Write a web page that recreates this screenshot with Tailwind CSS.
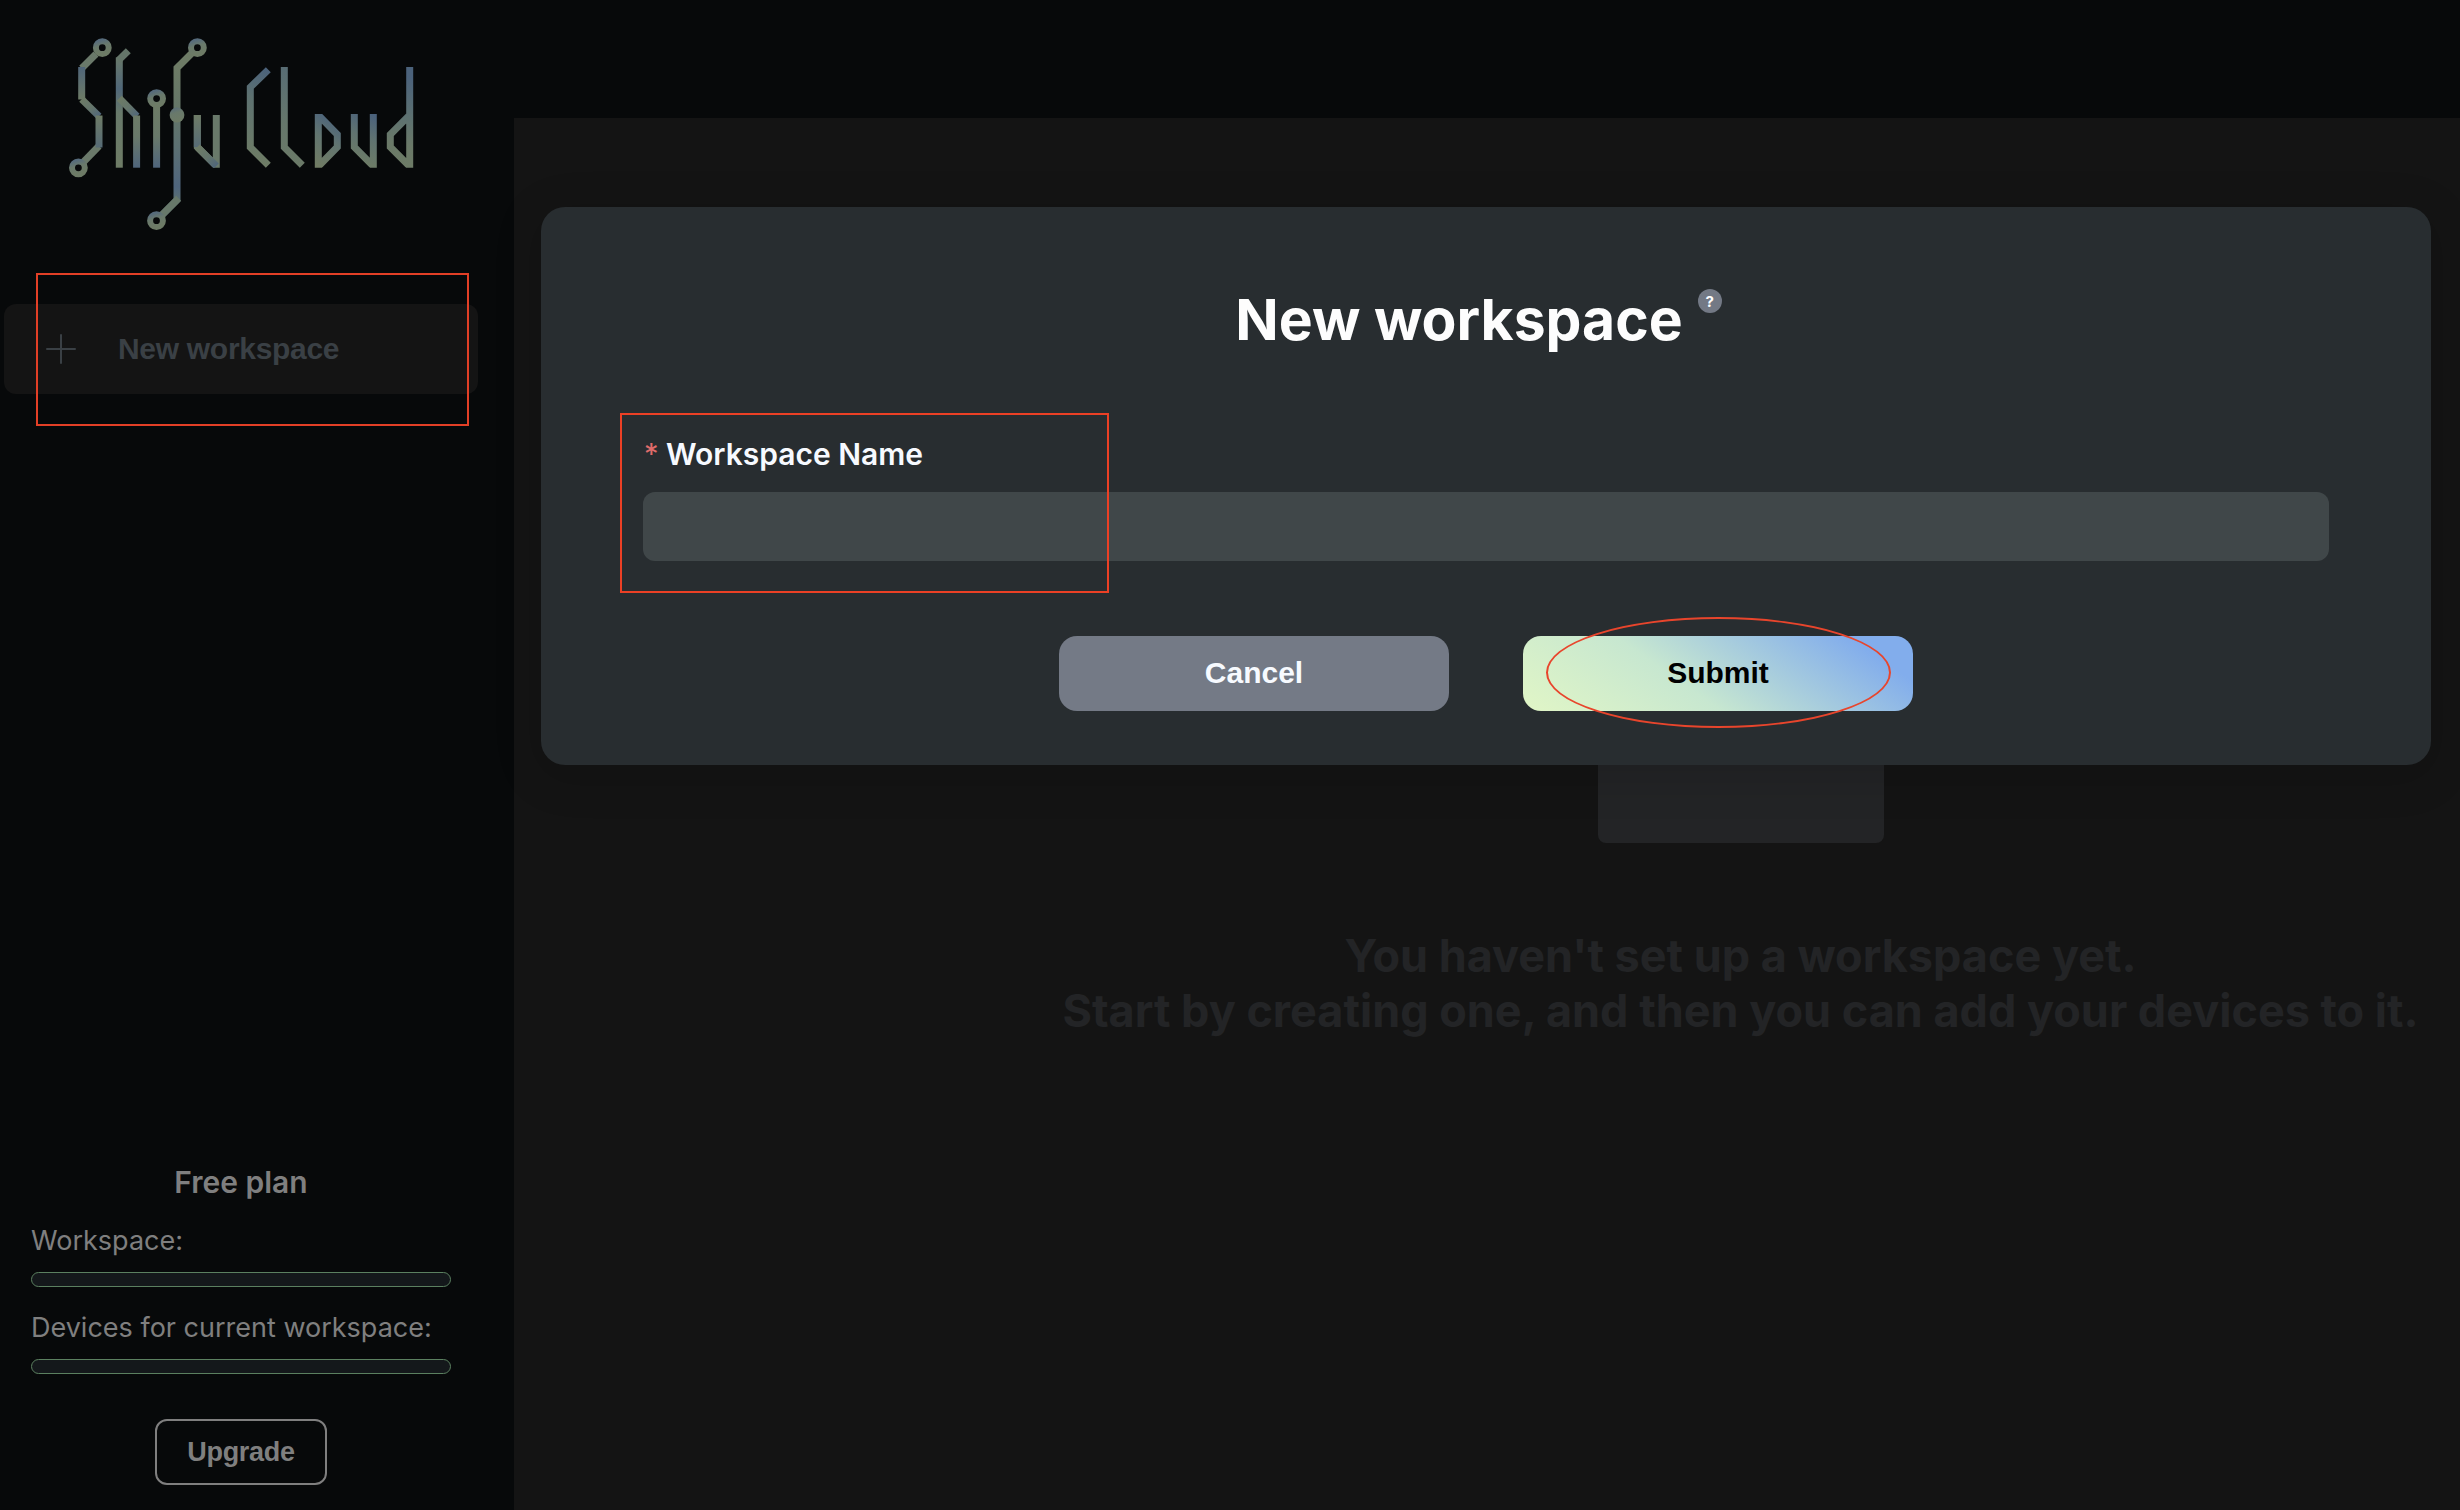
<!DOCTYPE html>
<html lang="en">
<head>
<meta charset="utf-8">
<title>Shifu Cloud</title>
<script src="https://cdn.jsdelivr.net/npm/@tailwindcss/browser@4"></script>
</head>
<body class="relative flex h-[1510px] w-[2460px] overflow-hidden bg-[#07090a] font-['Inter',sans-serif]">

<!-- Sidebar -->
<aside class="flex h-[1510px] w-[514px] shrink-0 flex-col">
  <svg class="mt-[30px] ml-[60px] h-[210px] w-[370px] shrink-0" viewBox="60 30 370 210" fill="none" stroke-width="7">
    <defs>
      <linearGradient id="ring" x1="0" y1="0" x2="0.3" y2="1"><stop offset="0" stop-color="#566b7c"/><stop offset=".45" stop-color="#69796b"/><stop offset="1" stop-color="#6d7b66"/></linearGradient>
      <linearGradient id="upper" gradientUnits="userSpaceOnUse" x1="0" y1="67" x2="0" y2="99"><stop offset="0" stop-color="#4f657a"/><stop offset="1" stop-color="#6d7b66"/></linearGradient>
      <linearGradient id="lower" gradientUnits="userSpaceOnUse" x1="0" y1="116" x2="0" y2="148"><stop offset="0" stop-color="#6d7b66"/><stop offset="1" stop-color="#566b76"/></linearGradient>
      <linearGradient id="hStem" gradientUnits="userSpaceOnUse" x1="0" y1="58" x2="0" y2="168"><stop offset="0" stop-color="#68786a"/><stop offset=".28" stop-color="#506779"/><stop offset=".5" stop-color="#68796a"/><stop offset="1" stop-color="#6e7c66"/></linearGradient>
      <linearGradient id="stem" gradientUnits="userSpaceOnUse" x1="0" y1="105" x2="0" y2="168"><stop offset="0" stop-color="#6d7b66"/><stop offset=".5" stop-color="#69796a"/><stop offset="1" stop-color="#4f657c"/></linearGradient>
      <linearGradient id="fStem" gradientUnits="userSpaceOnUse" x1="0" y1="67" x2="0" y2="200"><stop offset="0" stop-color="#6d7b66"/><stop offset=".32" stop-color="#647668"/><stop offset=".6" stop-color="#5c7072"/><stop offset=".9" stop-color="#4f657d"/><stop offset="1" stop-color="#5a6f72"/></linearGradient>
      <linearGradient id="diag" x1="0" y1="0" x2="1" y2="1"><stop offset="0" stop-color="#6d7b66"/><stop offset=".55" stop-color="#64756c"/><stop offset="1" stop-color="#50667a"/></linearGradient>
      <linearGradient id="cl" gradientUnits="userSpaceOnUse" x1="272" y1="68" x2="240" y2="160"><stop offset="0" stop-color="#4a617c"/><stop offset=".35" stop-color="#5d7170"/><stop offset="1" stop-color="#6f7d65"/></linearGradient>
      <linearGradient id="ll" gradientUnits="userSpaceOnUse" x1="288" y1="60" x2="282" y2="166"><stop offset="0" stop-color="#566b75"/><stop offset=".6" stop-color="#66776b"/><stop offset="1" stop-color="#6b7a68"/></linearGradient>
      <linearGradient id="dl" gradientUnits="userSpaceOnUse" x1="339" y1="125" x2="314" y2="166"><stop offset="0" stop-color="#4f667a"/><stop offset=".4" stop-color="#627570"/><stop offset="1" stop-color="#717c63"/></linearGradient>
      <linearGradient id="ul" gradientUnits="userSpaceOnUse" x1="377" y1="116" x2="358" y2="160"><stop offset="0" stop-color="#4a617c"/><stop offset=".5" stop-color="#607370"/><stop offset="1" stop-color="#6c7b67"/></linearGradient>
      <linearGradient id="dd" gradientUnits="userSpaceOnUse" x1="414" y1="78" x2="396" y2="166"><stop offset="0" stop-color="#4b627b"/><stop offset=".45" stop-color="#5d7170"/><stop offset=".75" stop-color="#6a7968"/><stop offset="1" stop-color="#6d7b66"/></linearGradient>
      <clipPath id="base"><rect x="60" y="30" width="370" height="137.7"/></clipPath>
      <clipPath id="bowl"><rect x="300" y="114" width="60" height="53.7"/></clipPath>
    </defs>
    <!-- S -->
    <path d="M96 54 81.7 68.3" stroke="#6a796a"/>
    <path d="M81.7 99.3 99 116.3" stroke="url(#diag)"/>
    <path d="M99 146 82 163.5" stroke="#6a796a"/>
    <path d="M81.7 67V99.5" stroke="url(#upper)"/>
    <path d="M99 115.5V147.5" stroke="url(#lower)"/>
    <!-- h -->
    <path d="M119.3 57.5V167.7" stroke="url(#hStem)"/>
    <path d="M128.3 50.7 118.3 60.6" stroke="#647569"/>
    <path d="M119.3 98.3 137 116.3" stroke="url(#diag)"/>
    <path d="M136.6 115.5V167.7" stroke="url(#stem)"/>
    <!-- i -->
    <path d="M156.6 106V167.7" stroke="url(#stem)"/>
    <!-- f -->
    <path d="M192 53 177 68V200L161 216" stroke="url(#fStem)"/>
    <path d="M178.6 198.3 161 216" stroke="#67786a"/>
    <!-- u -->
    <path clip-path="url(#base)" d="M197.3 115V147L216.3 166V115" stroke="#69796a"/>
    <path d="M197.3 115V147" stroke="url(#lower)"/>
    <path clip-path="url(#base)" d="M197.3 147 216.3 166" stroke="url(#diag)"/>
    <g stroke="url(#ring)" stroke-width="6">
      <circle cx="102.3" cy="47.7" r="6.4"/><circle cx="78.4" cy="167.8" r="6.4"/>
      <circle cx="156.6" cy="98.6" r="6.4"/><circle cx="197.4" cy="47.7" r="6.4"/>
      <circle cx="156.5" cy="220.7" r="6.4"/>
    </g>
    <circle cx="177" cy="115" r="7.4" fill="url(#ring)"/>
    <!-- Cloud -->
    <path d="M268.3 69.7 250.3 87.3V147.3L268.3 165.3" stroke="url(#cl)"/>
    <path d="M284.3 67V147.3L302.3 165.3" stroke="url(#ll)"/>
    <path clip-path="url(#bowl)" d="M318.3 115 337.3 134.5V147L318.3 166.5Z" stroke="url(#dl)"/>
    <path clip-path="url(#base)" d="M354.3 114V147L373.3 166.2V114" stroke="url(#ul)"/>
    <path clip-path="url(#base)" d="M409.7 67V166.5L390.3 147V134.5L409.7 115" stroke="url(#dd)"/>
  </svg>

  <nav class="mt-16 px-1">
    <a class="flex h-[90px] w-[474px] items-center rounded-xl bg-[#141414] pl-[42px] font-['Liberation_Sans',Arial,sans-serif] text-[30px] font-bold tracking-[-0.3px] text-[#3a4045]">
      <svg class="mr-[42px] size-[30px]" viewBox="0 0 30 30" stroke="#3a4045" stroke-width="2" stroke-linecap="round"><path d="M1 15H29M15 1V29"/></svg>
      <span class="pb-0.5">New workspace</span>
    </a>
  </nav>

  <section class="mt-auto flex flex-col px-[31px] pb-[25px] text-[27px] text-[#7f7f7f]">
    <h2 class="w-[420px] text-center text-[30px] leading-10 font-semibold">Free plan</h2>
    <p class="mt-[19px] leading-10">Workspace:</p>
    <div class="mt-[11px] h-[15px] w-[420px] rounded-full border border-[#5b8060] bg-[#14181b]"></div>
    <p class="mt-[21px] leading-10">Devices for current workspace:</p>
    <div class="mt-[11px] h-[15px] w-[420px] rounded-full border border-[#5b8060] bg-[#14181b]"></div>
    <div class="mt-[45px] flex w-[420px] justify-center">
      <button class="h-[66px] w-[172px] rounded-xl border-2 border-[#7f7f7f] font-['Liberation_Sans',Arial,sans-serif] font-bold tracking-[-0.3px]">Upgrade</button>
    </div>
  </section>
</aside>

<!-- Empty state -->
<main class="mt-[118px] flex flex-1 flex-col items-end bg-[#141414] pr-[43px]">
  <div class="flex w-[1353px] flex-col items-center whitespace-nowrap">
    <div class="mt-[439px] h-[286px] w-[286px] rounded-lg bg-[#232426]"></div>
    <p class="mt-[85px] text-center text-[45px] leading-[55px] font-bold text-[#232426]">You haven't set up a workspace yet.<br>Start by creating one, and then you can add your devices to it.</p>
  </div>
</main>

<!-- Dialog -->
<div class="absolute top-[207px] left-[541px] flex h-[558px] w-[1890px] flex-col items-center rounded-3xl bg-[#282d30] px-[102px] shadow-[0_9px_42px_8px_rgba(0,0,0,0.12)]">
  <h1 class="relative mt-[79px] -translate-x-[27px] text-[57px] leading-[68px] font-bold text-[#fdfdfd]">New workspace
    <span class="absolute top-[3px] -right-[39px] flex size-6 items-center justify-center rounded-full bg-[#737985] text-[15px] leading-none font-bold text-white">?</span>
  </h1>
  <label class="mt-20 flex h-10 w-full text-[30px] leading-10 font-semibold text-[#f7faff]"><span class="mr-[8px] ml-px w-[14px] text-[29px] font-normal text-[#e06c6a]">*</span>Workspace Name</label>
  <div class="mt-[18px] h-[69px] w-full rounded-xl bg-[#404749]"></div>
  <div class="mt-[75px] flex gap-[74px] font-['Liberation_Sans',Arial,sans-serif] text-[30px] font-bold">
    <button class="h-[75px] w-[390px] rounded-[18px] bg-[#747a86] pb-0.5 text-[#f7faff]">Cancel</button>
    <button class="h-[75px] w-[390px] rounded-[18px] bg-[linear-gradient(35deg,#e1f6c6_0%,#c7e7d0_40%,#82adec_87%)] pb-0.5 text-black">Submit</button>
  </div>
</div>

<!-- Highlight marks -->
<div class="absolute top-[273px] left-9 h-[153px] w-[433px] border-2 border-[#e23f26]"></div>
<div class="absolute top-[413px] left-[620px] h-[180px] w-[489px] border-2 border-[#ec4025]"></div>
<div class="absolute top-[617px] left-[1546px] h-[111px] w-[345px] rounded-[50%] border-2 border-[#e8452c]"></div>
</body>
</html>
